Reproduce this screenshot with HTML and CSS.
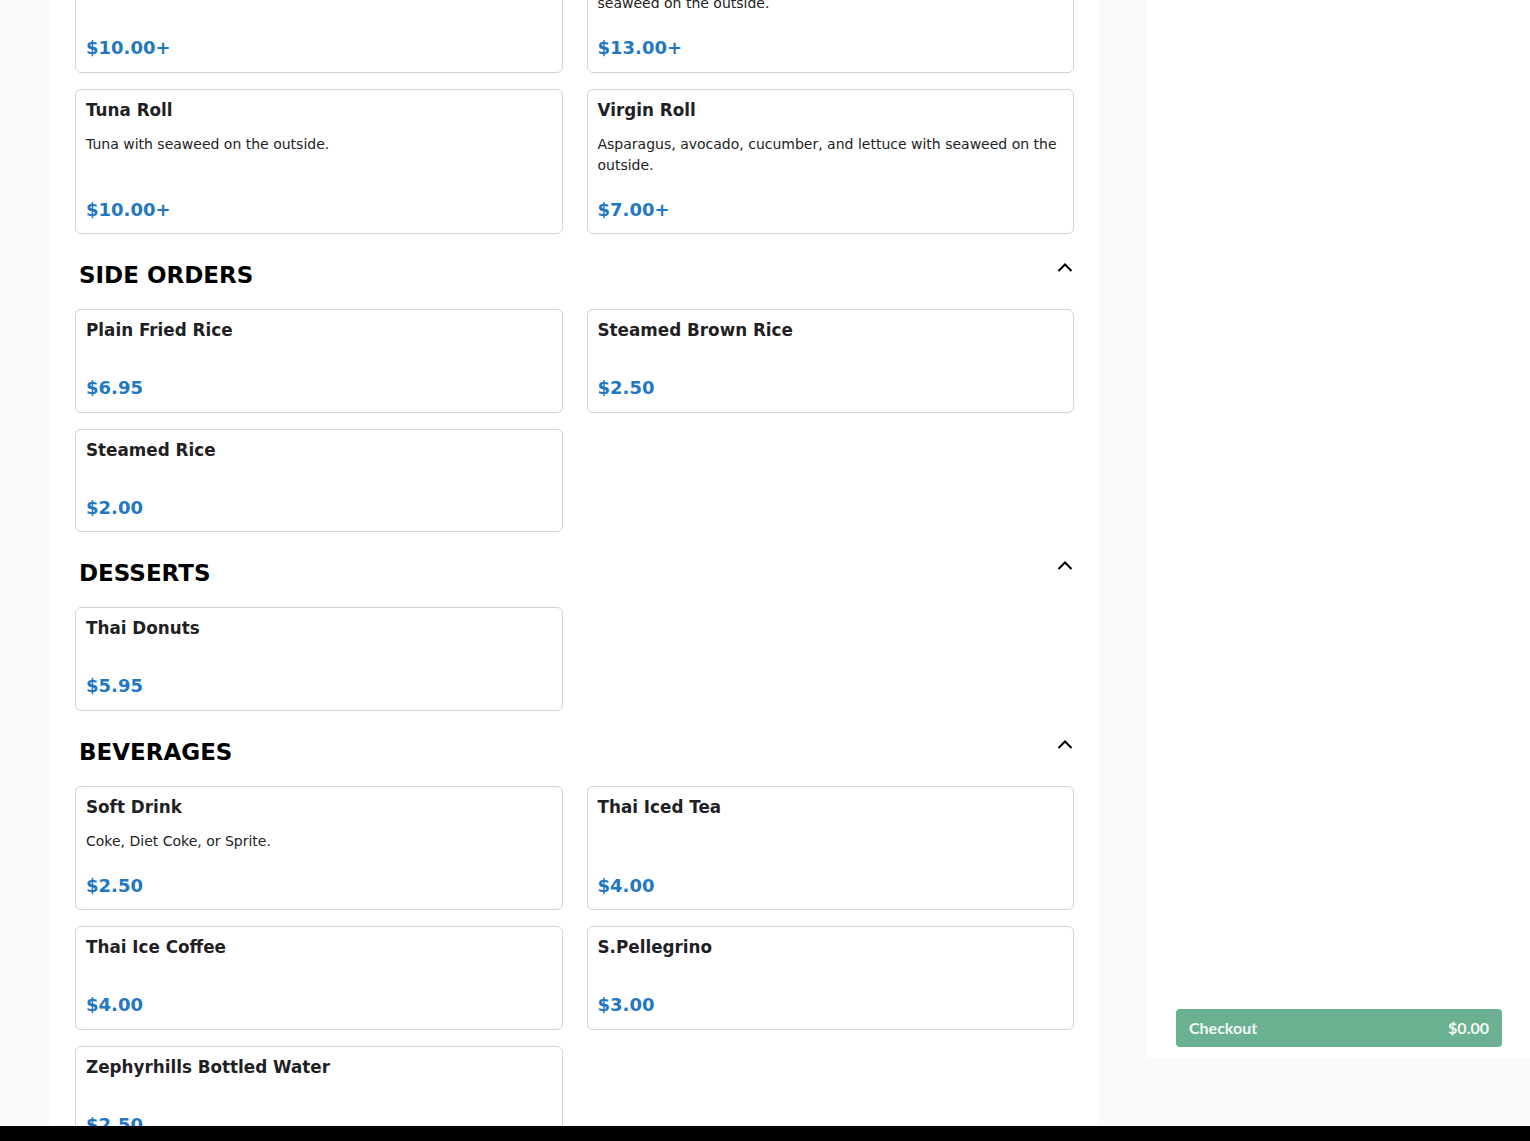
FILE: index.html
```html
<!DOCTYPE html>
<html lang="en">

<head>
    <meta charset="UTF-8">
    <meta name="viewport" content="width=device-width, initial-scale=1.0">
    <title>Menu</title>
    <link rel="stylesheet" href="styles.css">
</head>

<body>
    <div class="page">
        <main class="menu">
            <!-- rolls (continued) -->
            <div class="grid grid-first">
                <div class="card">
                    <h3 class="card-title">Spicy Tuna Roll</h3>
                    <p class="card-desc">Spicy tuna with seaweed on the outside.</p>
                    <div class="card-price">$10.00+</div>
                </div>
                <div class="card">
                    <h3 class="card-title">Dragon Roll</h3>
                    <p class="card-desc">Shrimp tempura, crab stick, avocado, and cucumber roll with seaweed on the outside.</p>
                    <div class="card-price">$13.00+</div>
                </div>
                <div class="card">
                    <h3 class="card-title">Tuna Roll</h3>
                    <p class="card-desc">Tuna with seaweed on the outside.</p>
                    <div class="card-price">$10.00+</div>
                </div>
                <div class="card">
                    <h3 class="card-title">Virgin Roll</h3>
                    <p class="card-desc">Asparagus, avocado, cucumber, and lettuce with seaweed on the outside.</p>
                    <div class="card-price">$7.00+</div>
                </div>
            </div>

            <div class="section-head">
                <h2>SIDE ORDERS</h2>
                <svg class="chevron" width="16" height="16" viewBox="0 0 16 16"><path d="M1.5 11 L8 4.5 L14.5 11" /></svg>
            </div>
            <div class="grid">
                <div class="card">
                    <h3 class="card-title">Plain Fried Rice</h3>
                    <p class="card-desc"></p>
                    <div class="card-price">$6.95</div>
                </div>
                <div class="card">
                    <h3 class="card-title">Steamed Brown Rice</h3>
                    <p class="card-desc"></p>
                    <div class="card-price">$2.50</div>
                </div>
                <div class="card">
                    <h3 class="card-title">Steamed Rice</h3>
                    <p class="card-desc"></p>
                    <div class="card-price">$2.00</div>
                </div>
            </div>

            <div class="section-head">
                <h2>DESSERTS</h2>
                <svg class="chevron" width="16" height="16" viewBox="0 0 16 16"><path d="M1.5 11 L8 4.5 L14.5 11" /></svg>
            </div>
            <div class="grid">
                <div class="card">
                    <h3 class="card-title">Thai Donuts</h3>
                    <p class="card-desc"></p>
                    <div class="card-price">$5.95</div>
                </div>
            </div>

            <div class="section-head">
                <h2>BEVERAGES</h2>
                <svg class="chevron" width="16" height="16" viewBox="0 0 16 16"><path d="M1.5 11 L8 4.5 L14.5 11" /></svg>
            </div>
            <div class="grid">
                <div class="card">
                    <h3 class="card-title">Soft Drink</h3>
                    <p class="card-desc">Coke, Diet Coke, or Sprite.</p>
                    <div class="card-price">$2.50</div>
                </div>
                <div class="card">
                    <h3 class="card-title">Thai Iced Tea</h3>
                    <p class="card-desc"></p>
                    <div class="card-price">$4.00</div>
                </div>
                <div class="card">
                    <h3 class="card-title">Thai Ice Coffee</h3>
                    <p class="card-desc"></p>
                    <div class="card-price">$4.00</div>
                </div>
                <div class="card">
                    <h3 class="card-title">S.Pellegrino</h3>
                    <p class="card-desc"></p>
                    <div class="card-price">$3.00</div>
                </div>
                <div class="card">
                    <h3 class="card-title">Zephyrhills Bottled Water</h3>
                    <p class="card-desc"></p>
                    <div class="card-price">$2.50</div>
                </div>
            </div>
        </main>

        <aside class="cart">
            <button class="checkout" disabled>
                <span>Checkout</span>
                <span>$0.00</span>
            </button>
        </aside>
    </div>

    <div class="bottom-bar"></div>
</body>

</html>
```

FILE: styles.css
```css
body {
    margin: 0;
    padding: 0;
    background-color: #f9f9f9;
    font-family: "DejaVu Sans", Verdana, sans-serif;
    color: #212529;
    overflow: hidden;
    height: 1141px;
}

.page {
    display: flex;
    align-items: flex-start;
    padding-left: 50px;
    gap: 48px;
}

.menu {
    width: 1049px;
    min-height: 1141px;
    box-sizing: border-box;
    background-color: #fff;
    padding: 0 25px 40px 25px;
}

/* 카드 그리드: 2열 */
.grid {
    display: grid;
    grid-template-columns: 1fr 1fr;
    column-gap: 24px;
    row-gap: 16px;
}

.grid-first {
    margin-top: -73px;  /* 스크롤된 상태 */
}

.card {
    display: flex;
    flex-direction: column;
    border: 1px solid #d3d3d3;
    border-radius: 6px;
    padding: 10px;
    background-color: #fff;
}

.card-title {
    margin: 0 0 14px 0;
    font-size: 16.8px;
    line-height: 20px;
    font-weight: bold;
    color: #1f1f24;
}

.card-desc {
    margin: 0 0 20px 0;
    font-size: 14px;
    line-height: 21px;
    color: #222;
}

.card-price {
    margin-top: auto;
    font-size: 18px;
    line-height: 27.5px;
    font-weight: bold;
    color: #2277c2;
}

.section-head {
    display: flex;
    justify-content: space-between;
    align-items: flex-start;
    margin: 24px 0 17px 0;
    padding: 0 1px 0 4px;
}

.section-head h2 {
    margin: 0;
    font-size: 23px;
    line-height: 34px;
    font-weight: bold;
    color: #000;
}

.chevron {
    margin-top: 2px;
}

.chevron path {
    fill: none;
    stroke: #000;
    stroke-width: 2;
}

.cart {
    width: 383px;
    height: 1058px;
    box-sizing: border-box;
    background-color: #fff;
    display: flex;
    flex-direction: column;
    justify-content: flex-end;
    padding: 0 28px 11px 29px;
}

.checkout {
    display: flex;
    justify-content: space-between;
    align-items: center;
    height: 38px;
    padding: 0 13px 1px 13px;
    border: none;
    border-radius: 4px;
    background-color: #69b190;
    color: #f4faf7;
    font-family: Lato, "Open Sans", sans-serif;
    font-size: 16px;
    font-weight: bold;
}

.bottom-bar {
    position: fixed;
    left: 0;
    right: 0;
    bottom: 0;
    height: 15px;
    background-color: #000;
}
```
